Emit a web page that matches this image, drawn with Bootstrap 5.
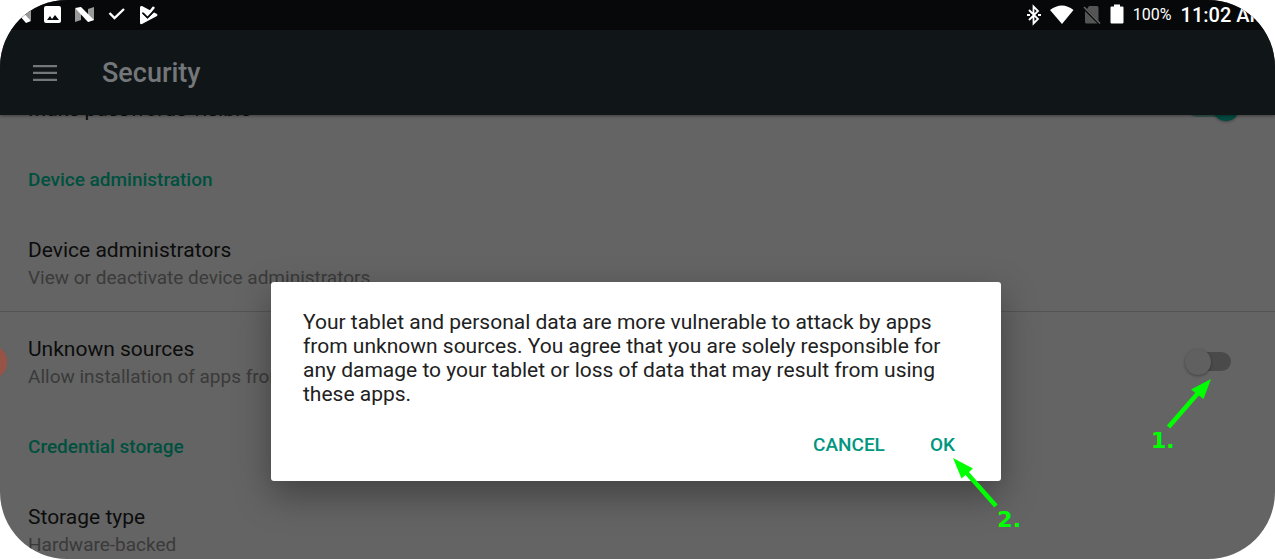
<!DOCTYPE html>
<html lang="en">
<head>
<meta charset="utf-8">
<meta name="viewport" content="width=device-width, initial-scale=1">
<title>Security</title>
<link href="https://cdn.jsdelivr.net/npm/bootstrap@5.3.0/dist/css/bootstrap.min.css" rel="stylesheet">
<style>
body{background:#fff;font-family:Roboto,sans-serif;color:#0c0c0c}
.screen{min-height:100vh;border-radius:67px;background:#646464}
.statusbar{height:30px;background:#060809;color:#fff;padding:0 8px 0 12px}
.statusbar svg{display:block;flex:none}
.status-left{gap:13px}
.status-right{gap:9px}
.pct{font-size:16px;line-height:30px}
.clock{font-size:20px;line-height:30px;font-weight:500;white-space:nowrap}
.appbar{height:85px;background:#101517;box-shadow:0 1px 3px rgba(0,0,0,.4);padding:0 31px;z-index:1}
.menu-btn{width:28px;height:28px;border:0;color:#74777a}
.appbar h1{font-size:27px;line-height:32px;font-weight:500;color:#74777a;margin:0 0 0 43px}
.pref{padding:23px 44px 19px 28px}
.pref.scrolled{margin-top:-43px;padding-bottom:20px}
.pref-title{display:block;font-size:21px;line-height:28px}
.pref-sum{font-size:19px;line-height:28px;color:#3a3a3a;margin:0}
.cat{font-size:19px;line-height:24px;font-weight:500;color:#00503f;padding:25px 28px 21px;margin:0}
.rule{border-top:1px solid #545454}
.sw{appearance:none;flex:none;width:44px;height:19px;border-radius:10px;background:#4a4a4a;position:relative;margin:0 0 4px}
.sw::before{content:"";position:absolute;left:-2px;top:-3px;width:26px;height:26px;border-radius:50%;background:#606060;box-shadow:0 1px 3px rgba(0,0,0,.35)}
.sw:checked{background:#375550}
.sw:checked::before{left:auto;right:-8px;background:#014a40}
.bubble{left:-27px;top:345px;width:34px;height:34px;border-radius:50%;background:#985347;box-shadow:0 0 1px #985347}
.dialog-box{top:282px;left:271px;right:274px;border-radius:3px;background:#fff;color:#212121;padding:28px 46px 24px 32px;box-shadow:0 14px 36px rgba(0,0,0,.35);z-index:2}
.dialog-box p{font-size:21px;line-height:24px;margin:0 0 27px}
.dialog-actions{gap:45px}
.dlg-btn{font-size:19px;line-height:24px;font-weight:500;color:#009680;border:0}
.note{z-index:3;color:#0f0;font:bold 22px/24px "DejaVu Sans",sans-serif}
.note svg{display:block}
.note-1{top:378px;right:63px}
.note-1 span{display:block}
.note-2{top:176px;right:-20px}
.note-2 span{display:block;text-align:right}
</style>
</head>
<body>
<div class="screen position-relative overflow-hidden">
<header>
<div class="statusbar d-flex justify-content-between">
<div class="status-left d-flex align-items-center" aria-hidden="true">
<svg width="19" height="18" viewBox="0 0 19 18"><path fill="#999" d="M0 1h6v13l-6 2zM13 3l6-2v13l-6 2z"/><path fill="#fff" d="M0 1h6l13 14-5 2z"/></svg>
<svg width="18" height="18" viewBox="0 0 18 18"><path fill="#fff" fill-rule="evenodd" d="M2 0h13a2 2 0 0 1 2 2v13a2 2 0 0 1-2 2H2a2 2 0 0 1-2-2V2a2 2 0 0 1 2-2zM3 14h12l-4-5-3 4-2-3z"/></svg>
<svg width="19" height="18" viewBox="0 0 19 18"><path fill="#999" d="M0 3l6-2v13l-6 2zM13 3l6-2v13l-6 2z"/><path fill="#fff" d="M0 2l6-1 13 13-6 2z"/></svg>
<svg width="20" height="18" viewBox="0 0 20 18"><path fill="none" stroke="#fff" stroke-width="2.400" d="M2.500 7l5 5L17 3"/></svg>
<svg width="18" height="20" viewBox="0 0 18 20"><path fill="#fff" d="M0 2.500Q0 .5 2 1l15 8q1 1 0 2L2 19q-2 .6-2-1z"/><path fill="none" stroke="#060809" stroke-width="1.800" d="M2.500 7.500l5 5L18 2"/><path fill="#060809" d="M9 4l3-4h6v8z"/><path fill="none" stroke="#fff" stroke-width="2.600" d="M3 5.500l4.500 4.500 6.500-8"/><path fill="none" stroke="#060809" stroke-width="1.500" d="M3 8l4.500 4.500 7-7"/></svg>
</div>
<div class="status-right d-flex align-items-center">
<svg width="14" height="22" viewBox="0 0 14 22"><path fill="none" stroke="#fff" stroke-width="1.800" d="M2 6l9 9-4.500 4.500v-17L11 7l-9 9"/><path fill="#fff" d="M0 10h3v2H0zM11 10h3v2h-3z"/></svg>
<svg width="24" height="20" viewBox="0 0 24 20"><path fill="#fff" d="M0 5Q12-4 23.500 5L12 19z"/></svg>
<svg width="18" height="20" viewBox="0 0 18 20"><path fill="#555" d="M6 1h8a1.500 1.500 0 0 1 1.500 1.500V16L4 4zM2 6l12.500 12.500H3.500A1.500 1.500 0 0 1 2 17z"/><path stroke="#666" stroke-width="1.500" d="M1 2l16 16.500"/></svg>
<svg width="14" height="22" viewBox="0 0 14 22"><path fill="#fff" d="M1.500 2.500H4V.5h6v2h2.500q1 0 1 1v15q0 1-1 1h-11q-1 0-1-1v-15q0-1 1-1z"/></svg>
<span class="pct">100%</span>
<span class="clock">11:02 AM</span>
</div>
</div>
<div class="appbar d-flex position-relative align-items-center">
<button class="menu-btn bg-transparent p-0" type="button" aria-label="Menu"><svg class="d-block" width="28" height="28" viewBox="0 0 28 28"><path fill="currentColor" d="M2 6h24v2.300H2zM2 12.800h24v2.300H2zM2 19.700h24V22H2z"/></svg></button>
<h1>Security</h1>
</div>
</header>
<main class="overflow-hidden">
<div class="pref scrolled d-flex justify-content-between align-items-center">
<label class="pref-title" for="pw">Make passwords visible</label>
<input class="sw" type="checkbox" role="switch" id="pw" checked>
</div>
<h2 class="cat">Device administration</h2>
<div class="pref">
<span class="pref-title">Device administrators</span>
<p class="pref-sum">View or deactivate device administrators</p>
</div>
<div class="pref rule d-flex justify-content-between align-items-center">
<div>
<label class="pref-title" for="unknown">Unknown sources</label>
<p class="pref-sum">Allow installation of apps from unknown sources</p>
</div>
<input class="sw" type="checkbox" role="switch" id="unknown">
</div>
<h2 class="cat">Credential storage</h2>
<div class="pref pb-0">
<span class="pref-title">Storage type</span>
<p class="pref-sum">Hardware-backed</p>
</div>
</main>
<div class="bubble position-absolute"></div>
<section class="dialog-box position-absolute" role="dialog" aria-labelledby="msg">
<p id="msg">Your tablet and personal data are more vulnerable to attack by apps from unknown sources. You agree that you are solely responsible for any damage to your tablet or loss of data that may result from using these apps.</p>
<div class="dialog-actions d-flex justify-content-end">
<button class="dlg-btn bg-transparent p-0" type="button">CANCEL</button>
<button class="dlg-btn bg-transparent p-0" type="button">OK</button>
</div>
<div class="note note-2 position-absolute">
<svg width="68" height="50" viewBox="0 0 68 50"><path fill="#0f0" d="M0 0l20 10.500L8.500 20.500z"/><path stroke="#0f0" stroke-width="4.500" d="M12 13l31 35"/></svg>
<span>2.</span>
</div>
</section>
<div class="note note-1 position-absolute">
<svg width="61" height="51" viewBox="0 0 61 51"><path fill="#0f0" d="M60 1L40 11.500l12.500 9.500z"/><path stroke="#0f0" stroke-width="4.500" d="M48 14L17.500 49"/></svg>
<span>1.</span>
</div>
</div>
<script src="https://cdn.jsdelivr.net/npm/bootstrap@5.3.0/dist/js/bootstrap.bundle.min.js"></script>
</body>
</html>
